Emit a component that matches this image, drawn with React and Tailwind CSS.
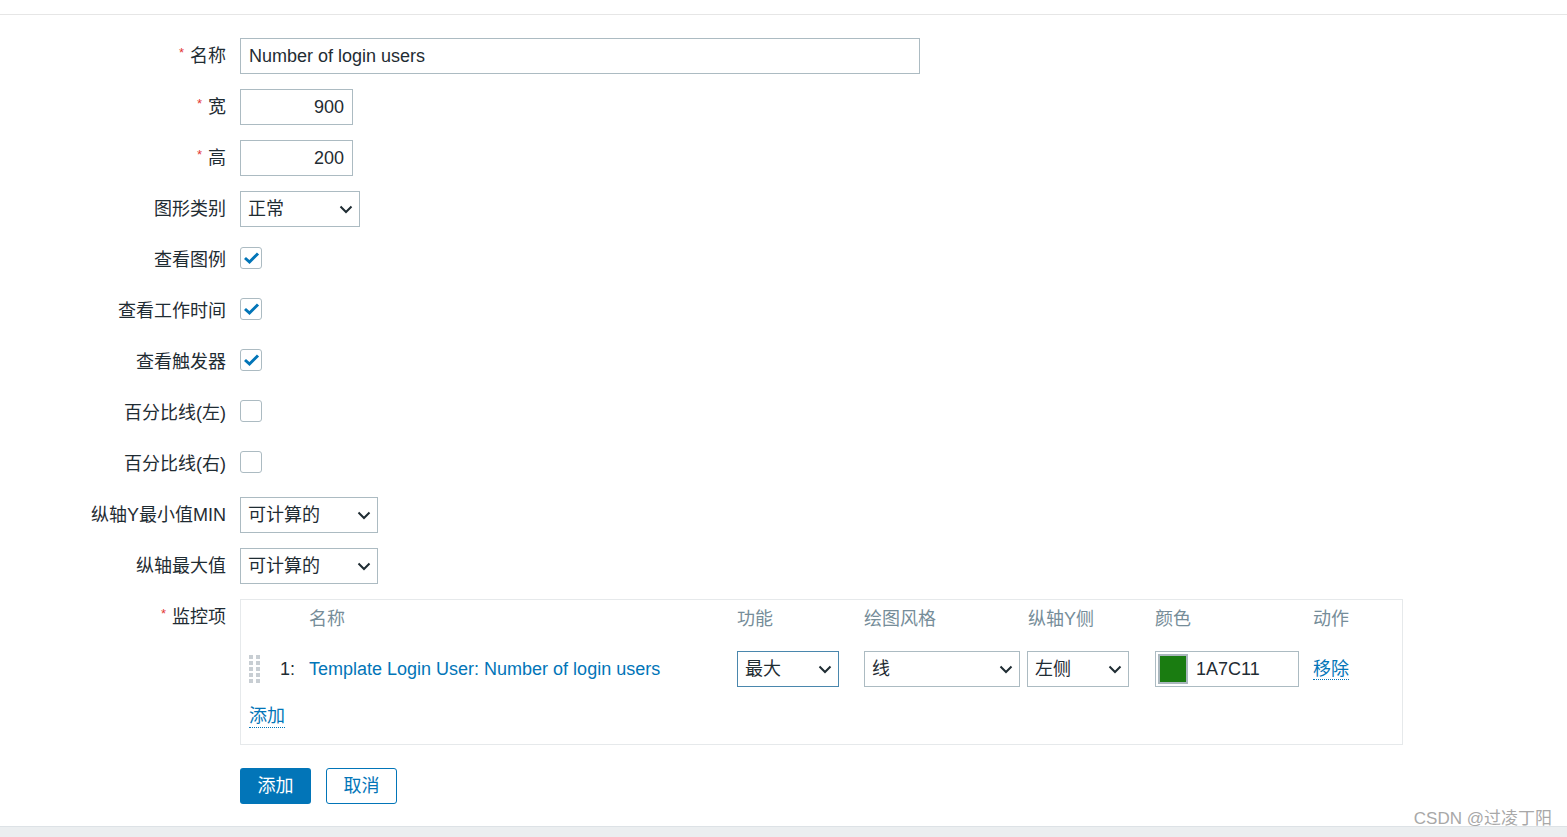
import clsx from 'clsx';

const FONT = { fontFamily: '"Liberation Sans", Arial, "Noto Sans CJK SC", sans-serif' };

const Chevron = () => (
  <svg width="14" height="9" viewBox="0 0 14 9" className="shrink-0">
    <polyline points="1.5,1.5 7,7 12.5,1.5" fill="none" stroke="#1f2c33" strokeWidth="2" />
  </svg>
);

const Select = ({ value, width, focused }) => (
  <div
    className={clsx(
      'h-9 flex items-center justify-between pl-[7px] pr-[6px] bg-white border',
      focused ? 'border-[#4a87ad]' : 'border-[#acbbc2]'
    )}
    style={{ width }}
  >
    <span className="text-[18px] text-[#1f2c33]">{value}</span>
    <Chevron />
  </div>
);

const Checkbox = ({ checked }) => (
  <div className="w-[22px] h-[22px] mb-[4px] rounded-[3px] border border-[#acbbc2] bg-white flex items-center justify-center">
    {checked && (
      <svg width="17" height="14" viewBox="0 0 17 14">
        <polyline points="2,7 6.5,11 15,2.5" fill="none" stroke="#0275b8" strokeWidth="3" />
      </svg>
    )}
  </div>
);

const Row = ({ label, required, children, top }) => (
  <div className={clsx('flex gap-[14px]', top ? 'items-start' : 'items-center h-9')}>
    <div
      className={clsx(
        'w-[226px] shrink-0 flex justify-end items-center text-[18px] text-[#1f2c33]',
        top && 'h-9'
      )}
    >
      {required && <span className="text-[#e33734] text-[13px] mr-[6px] -mt-[6px]">*</span>}
      <span>{label}</span>
    </div>
    {children}
  </div>
);

const DragHandle = () => (
  <div className="grid grid-cols-2 gap-x-[3px] gap-y-[2px] w-[10px]">
    {Array.from({ length: 10 }).map((_, i) => (
      <span key={i} className="w-[4px] h-[4px] bg-[#c8ced3]" />
    ))}
  </div>
);

const App = () => {
  return (
    <div className="relative w-full h-[837px] bg-white overflow-hidden" style={FONT}>
      <div className="h-[15px] border-b border-[#e6e6e6]" />
      <div className="pt-[23px] flex flex-col gap-[15px]">
        <Row label="名称" required>
          <div className="w-[680px] h-9 border border-[#acbbc2] flex items-center pl-[8px] text-[18px] text-[#1f2c33]">
            Number of login users
          </div>
        </Row>
        <Row label="宽" required>
          <div className="w-[113px] h-9 border border-[#acbbc2] flex items-center justify-end pr-[8px] text-[18px] text-[#1f2c33]">
            900
          </div>
        </Row>
        <Row label="高" required>
          <div className="w-[113px] h-9 border border-[#acbbc2] flex items-center justify-end pr-[8px] text-[18px] text-[#1f2c33]">
            200
          </div>
        </Row>
        <Row label="图形类别">
          <Select value="正常" width={120} />
        </Row>
        <Row label="查看图例">
          <Checkbox checked />
        </Row>
        <Row label="查看工作时间">
          <Checkbox checked />
        </Row>
        <Row label="查看触发器">
          <Checkbox checked />
        </Row>
        <Row label="百分比线(左)">
          <Checkbox />
        </Row>
        <Row label="百分比线(右)">
          <Checkbox />
        </Row>
        <Row label="纵轴Y最小值MIN">
          <Select value="可计算的" width={138} />
        </Row>
        <Row label="纵轴最大值">
          <Select value="可计算的" width={138} />
        </Row>
        <Row label="监控项" required top>
          <div className="w-[1163px] border border-[#e6e9eb] pl-[8px] pt-[1px] pb-[15px]">
            <div className="grid grid-cols-[60px_428px_127px_164px_127px_158px_1fr] items-center h-9 text-[18px] text-[#768d99]">
              <div />
              <div>名称</div>
              <div>功能</div>
              <div>绘图风格</div>
              <div>纵轴Y侧</div>
              <div>颜色</div>
              <div>动作</div>
            </div>
            <div className="grid grid-cols-[60px_428px_127px_164px_127px_158px_1fr] items-center h-9 mt-[14px] text-[18px]">
              <div className="flex items-center">
                <DragHandle />
                <span className="ml-[21px] text-[#1f2c33]">1:</span>
              </div>
              <div className="text-[#0275b8]">Template Login User: Number of login users</div>
              <div>
                <Select value="最大" width={102} focused />
              </div>
              <div>
                <Select value="线" width={156} />
              </div>
              <div className="-ml-px">
                <Select value="左侧" width={102} />
              </div>
              <div>
                <div className="w-[144px] h-9 border border-[#acbbc2] flex items-center pl-[2px]">
                  <div className="w-[30px] h-[30px] bg-[#1a7c11] border-[2px] border-[#aab7bd]" />
                  <span className="ml-[8px] text-[#1f2c33]">1A7C11</span>
                </div>
              </div>
              <div>
                <span className="text-[#0275b8] border-b border-dotted border-[#0275b8] leading-[22px]">移除</span>
              </div>
            </div>
            <div className="h-[26px] mt-[16px] flex items-center">
              <span className="text-[18px] text-[#0275b8] border-b border-dotted border-[#0275b8] leading-[22px]">添加</span>
            </div>
          </div>
        </Row>
        <div className="flex gap-[15px] pl-[240px] mt-[8px]">
          <div className="w-[71px] h-9 rounded-[3px] bg-[#0275b8] text-white text-[18px] flex items-center justify-center">
            添加
          </div>
          <div className="w-[71px] h-9 rounded-[3px] border border-[#0275b8] bg-white text-[#0275b8] text-[18px] flex items-center justify-center">
            取消
          </div>
        </div>
      </div>
      <div className="absolute left-0 right-0 top-[826px] bottom-0 bg-[#ebeef0] border-t border-[#dde2e6]" />
      <div className="absolute right-[15px] top-[806px] text-[17px] text-[#a8a8a8]">CSDN @过凌丁阳</div>
    </div>
  );
};

export default App;
